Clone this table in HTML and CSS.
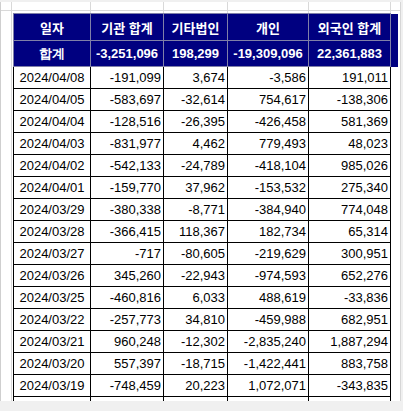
FILE: index.html
```html
<!DOCTYPE html>
<html lang="ko">
<head>
<meta charset="utf-8">
<link rel="stylesheet" href="styles.css">
</head>
<body>
<div class="sheet">
  <table class="grid">
    <colgroup>
      <col class="c-date"><col class="c-inst"><col class="c-corp"><col class="c-ind"><col class="c-for"><col class="c-spill">
    </colgroup>
    <thead>
      <tr class="head">
        <th>일자</th><th>기관 합계</th><th>기타법인</th><th>개인</th><th>외국인 합계</th><th class="spill"></th>
      </tr>
      <tr class="head total">
        <th>합계</th><th>-3,251,096</th><th>198,299</th><th>-19,309,096</th><th>22,361,883</th><th class="spill"></th>
      </tr>
    </thead>
    <tbody>
      <tr><td class="date">2024/04/08</td><td>-191,099</td><td>3,674</td><td>-3,586</td><td>191,011</td><td class="spill"></td></tr>
      <tr><td class="date">2024/04/05</td><td>-583,697</td><td>-32,614</td><td>754,617</td><td>-138,306</td><td class="spill"></td></tr>
      <tr><td class="date">2024/04/04</td><td>-128,516</td><td>-26,395</td><td>-426,458</td><td>581,369</td><td class="spill"></td></tr>
      <tr><td class="date">2024/04/03</td><td>-831,977</td><td>4,462</td><td>779,493</td><td>48,023</td><td class="spill"></td></tr>
      <tr><td class="date">2024/04/02</td><td>-542,133</td><td>-24,789</td><td>-418,104</td><td>985,026</td><td class="spill"></td></tr>
      <tr><td class="date">2024/04/01</td><td>-159,770</td><td>37,962</td><td>-153,532</td><td>275,340</td><td class="spill"></td></tr>
      <tr><td class="date">2024/03/29</td><td>-380,338</td><td>-8,771</td><td>-384,940</td><td>774,048</td><td class="spill"></td></tr>
      <tr><td class="date">2024/03/28</td><td>-366,415</td><td>118,367</td><td>182,734</td><td>65,314</td><td class="spill"></td></tr>
      <tr><td class="date">2024/03/27</td><td>-717</td><td>-80,605</td><td>-219,629</td><td>300,951</td><td class="spill"></td></tr>
      <tr><td class="date">2024/03/26</td><td>345,260</td><td>-22,943</td><td>-974,593</td><td>652,276</td><td class="spill"></td></tr>
      <tr><td class="date">2024/03/25</td><td>-460,816</td><td>6,033</td><td>488,619</td><td>-33,836</td><td class="spill"></td></tr>
      <tr><td class="date">2024/03/22</td><td>-257,773</td><td>34,810</td><td>-459,988</td><td>682,951</td><td class="spill"></td></tr>
      <tr><td class="date">2024/03/21</td><td>960,248</td><td>-12,302</td><td>-2,835,240</td><td>1,887,294</td><td class="spill"></td></tr>
      <tr><td class="date">2024/03/20</td><td>557,397</td><td>-18,715</td><td>-1,422,441</td><td>883,758</td><td class="spill"></td></tr>
      <tr><td class="date">2024/03/19</td><td>-748,459</td><td>20,223</td><td>1,072,071</td><td>-343,835</td><td class="spill"></td></tr>
      <tr class="cut"><td></td><td></td><td></td><td></td><td></td><td class="spill"></td></tr>
    </tbody>
  </table>
</div>
</body>
</html>
```

FILE: styles.css
```css
html, body {
  margin: 0;
  padding: 0;
}

body {
  background: #f0f0f0;
  width: 403px;
  height: 411px;
  overflow: hidden;
}

.sheet {
  box-sizing: border-box;
  margin-top: 2px;
  width: 401px;
  height: 399px;
  padding: 11px 0 0 12px;
  background-color: #ffffff;
  background-image:
    linear-gradient(#d9d9d9, #d9d9d9),
    linear-gradient(#d9d9d9, #d9d9d9),
    linear-gradient(#d9d9d9, #d9d9d9),
    linear-gradient(#d9d9d9, #d9d9d9),
    linear-gradient(#d9d9d9, #d9d9d9),
    linear-gradient(#d9d9d9, #d9d9d9),
    linear-gradient(#d9d9d9, #d9d9d9);
  background-repeat: no-repeat;
  background-size: 1px 100%, 100% 1px, 1px 12px, 1px 12px, 1px 12px, 1px 12px, 1px 12px;
  background-position: 10px 0, 0 8px, 89px 0, 162px 0, 226px 0, 307px 0, 389px 0;
  border-left: 1px solid #cfcfcf;
  border-right: 1px solid #d6d6d6;
  overflow: hidden;
  font-family: "Liberation Sans", Arial, "Noto Sans CJK KR", sans-serif;
  font-size: 13px;
  color: #000;
}

.grid {
  border-collapse: collapse;
  table-layout: fixed;
  width: 384px;
}

.c-date { width: 77px; }
.c-inst { width: 73px; }
.c-corp { width: 64px; }
.c-ind { width: 81px; }
.c-for { width: 82px; }
.c-spill { width: 7px; }

.grid th,
.grid td {
  padding: 0 2px;
  border: 1px solid #000;
  white-space: nowrap;
  overflow: hidden;
}

.head th {
  height: 26px;
  background: #000080;
  color: #fff;
  font-family: "Noto Sans CJK KR", "Liberation Sans", sans-serif;
  font-size: 13px;
  font-weight: 700;
  text-align: center;
  border-color: #8080a8;
}

.head.total th {
  height: 25px;
  font-family: "Liberation Sans", Arial, sans-serif;
  font-size: 13px;
}

.grid td {
  height: 21px;
  text-align: right;
  background: #fff;
}

.grid td.date {
  text-align: center;
}

.grid .spill {
  border-top: none;
  border-bottom: none;
  border-right: none;
}

.grid td.spill {
  background: transparent;
}
```
